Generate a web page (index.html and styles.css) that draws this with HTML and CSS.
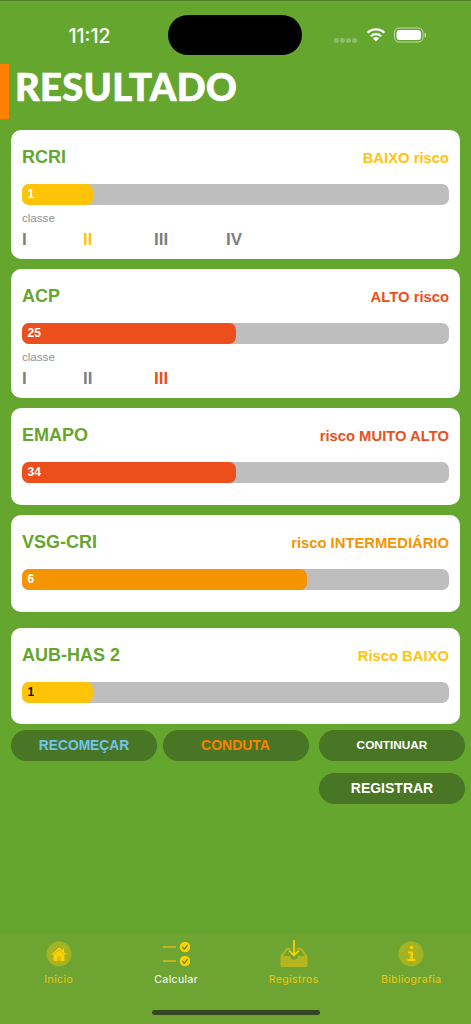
FILE: index.html
```html
<!DOCTYPE html>
<html lang="pt">
<head>
<meta charset="utf-8">
<title>Resultado</title>
<link rel="stylesheet" href="styles.css">
</head>
<body>
<div class="screen">
  <header class="status">
    <span class="time">11:12</span>
    <span class="island"></span>
    <span class="status-icons">
      <span class="signal"><i></i><i></i><i></i><i></i></span>
      <svg class="wifi" width="20" height="15" viewBox="0 0 20 15"><path d="M10 14.6 6.9 11.3a4.4 4.4 0 0 1 6.2 0Z" fill="#fff"/><path d="M4.9 9.2a7.3 7.3 0 0 1 10.2 0" fill="none" stroke="#fff" stroke-width="2.2"/><path d="M1.6 5.8a12 12 0 0 1 16.8 0" fill="none" stroke="#fff" stroke-width="2.2"/></svg>
      <svg class="battery" width="33" height="16" viewBox="0 0 33 16"><rect x=".5" y="1" width="28.500" height="14" rx="4.500" fill="none" stroke="#c4dcae" stroke-width="1"/><rect x="2.500" y="3" width="24.500" height="10" rx="3" fill="#fff"/><rect x="30.500" y="6" width="1.500" height="4" rx=".7" fill="#c4dcae"/></svg>
    </span>
  </header>

  <div class="title-row">
    <span class="title-mark"></span>
    <h1 class="title">RESULTADO</h1>
  </div>

  <main class="cards">
    <section class="card card-class">
      <div class="card-head"><h2>RCRI</h2><span class="risk c-yellow">BAIXO risco</span></div>
      <div class="track"><div class="fill b-yellow w-16">1</div></div>
      <div class="class-label">classe</div>
      <div class="classes"><span>I</span><span class="c-yellow">II</span><span>III</span><span>IV</span></div>
    </section>
    <section class="card card-class">
      <div class="card-head"><h2>ACP</h2><span class="risk c-red">ALTO risco</span></div>
      <div class="track"><div class="fill b-red w-50">25</div></div>
      <div class="class-label">classe</div>
      <div class="classes"><span>I</span><span>II</span><span class="c-red">III</span></div>
    </section>
    <section class="card card-emapo">
      <div class="card-head"><h2>EMAPO</h2><span class="risk c-red">risco MUITO ALTO</span></div>
      <div class="track"><div class="fill b-red w-50">34</div></div>
    </section>
    <section class="card card-vsg">
      <div class="card-head"><h2>VSG-CRI</h2><span class="risk c-orange">risco INTERMEDIÁRIO</span></div>
      <div class="track"><div class="fill b-orange w-67">6</div></div>
    </section>
    <section class="card card-last">
      <div class="card-head"><h2>AUB-HAS 2</h2><span class="risk c-yellow">Risco BAIXO</span></div>
      <div class="track"><div class="fill b-yellow w-16 dark">1</div></div>
    </section>
  </main>

  <div class="actions">
    <button class="btn c-blue">RECOMEÇAR</button>
    <button class="btn c-amber">CONDUTA</button>
    <button class="btn btn-small">CONTINUAR</button>
    <button class="btn btn-register">REGISTRAR</button>
  </div>

  <nav class="tabs">
    <div class="tab">
      <svg width="26" height="26" viewBox="0 0 26 26"><circle cx="13" cy="13" r="12.500" fill="#a3b322"/><path d="M13 6.500 5.800 13l.9 1L13 8.500l6.300 5.500.9-1-2.200-2V7.500H17v2Z" fill="#ffd000"/><path d="M7.500 14 13 9.300l5.500 4.700v6h-3.500v-4.200h-4V20H7.500Z" fill="#ffd000"/><rect x="11" y="15.800" width="4" height="4.200" fill="#d8c010"/></svg>
      <span>Inicio</span>
    </div>
    <div class="tab tab-active">
      <svg width="27" height="26" viewBox="0 0 27 26"><rect x="0" y="5" width="13" height="2" fill="#c4b41c"/><rect x="0" y="19" width="13" height="2" fill="#c4b41c"/><circle cx="22" cy="6" r="5.300" fill="#ffd000"/><circle cx="22" cy="20" r="5.300" fill="#ffd000"/><path d="m19.300 6 2 2.200L24.800 3.800M19.300 20l2 2.200 3.500-4.400" fill="none" stroke="#5f8f2c" stroke-width="1.300"/></svg>
      <span>Calcular</span>
    </div>
    <div class="tab">
      <svg width="28" height="28" viewBox="0 0 28 28"><path d="M1 17 6.500 9.500A2 2 0 0 1 8 9h3M27 17l-5.500-7.500A2 2 0 0 0 20 9h-3" fill="none" stroke="#b5b61f" stroke-width="2"/><path d="M1 16.500h9a4 4 0 0 0 8 0h9a1 1 0 0 1 1 1V26a2 2 0 0 1-2 2H2a2 2 0 0 1-2-2v-8.500a1 1 0 0 1 1-1Z" fill="#b5b61f"/><path d="M14 0v16M9 11l5 5 5-5" fill="none" stroke="#ffd000" stroke-width="1.800"/></svg>
      <span>Registros</span>
    </div>
    <div class="tab">
      <svg width="26" height="26" viewBox="0 0 26 26"><circle cx="13" cy="13" r="12.500" fill="#a3b322"/><circle cx="13.500" cy="6.500" r="1.800" fill="#ffd000"/><path d="M10 10.500h5V18h2.500v2h-8v-2H12.500v-5.500H10Z" fill="#ffd000"/></svg>
      <span>Bibliografia</span>
    </div>
  </nav>
  <div class="home-bar"></div>
</div>
</body>
</html>
```
FILE: styles.css
```css
* { box-sizing: border-box; }
html, body { margin: 0; padding: 0; }
body { background: #65a62f; font-family: "Liberation Sans", Arial, sans-serif; }
.screen {
  width: 471px; height: 1024px; overflow: hidden;
  background: #65a62f; border-top: 1px solid #4f7f2b;
  display: flex; flex-direction: column; position: relative;
}
.status { height: 63px; display: flex; align-items: flex-start; padding-top: 14px; }
.time {
  width: 168px; padding-top: 9px; text-align: center; padding-left: 11px;
  font: 500 19.500px "Inter", sans-serif; color: #fff;
}
.island { width: 134px; height: 40px; border-radius: 20px; background: #000; }
.status-icons { display: flex; align-items: flex-start; padding-left: 32px; }
.signal { display: flex; gap: 1.500px; margin-top: 23px; width: 24px; }
.signal i { width: 4.500px; height: 4.500px; border-radius: 50%; background: #8fbe6b; display: block; }
.wifi { margin: 12px 0 0 8px; }
.battery { margin: 12px 0 0 8px; }

.title-row { display: flex; height: 55px; margin-bottom: 11px; }
.title-mark { width: 9px; height: 55px; background: #ff8000; }
.title {
  margin: 0 0 0 6px; font: 900 38px/45px "Lato", sans-serif; color: #fff;
  -webkit-text-stroke: 0.7px #fff; letter-spacing: 0.35px;
}
.cards { display: flex; flex-direction: column; gap: 10px; padding: 0 11px; }
.card { background: #fff; border-radius: 10px; height: 96px; padding: 0 11px; }
.card-class { height: 129px; }
.card-emapo { height: 96.500px; }
.card-vsg { margin-top: .5px; height: 96.500px; }
.card-last { margin-top: 6.500px; }
.card-head { display: flex; justify-content: space-between; align-items: center; height: 54px; padding-top: 1.500px; }
.card-head h2 { margin: 0; font: 700 18px "Liberation Sans", sans-serif; color: #65a62f; }
.risk { font: 700 14.800px "Liberation Sans", sans-serif; }
.track { height: 21px; border-radius: 7px; background: #bebebe; }
.fill {
  height: 21px; border-radius: 7px; padding-left: 5.500px; color: #fff;
  font: 700 12px/21px "Liberation Sans", sans-serif;
}
.dark { color: #111; }
.w-16 { width: 16.600%; }
.w-50 { width: 50%; }
.w-67 { width: 66.700%; }
.b-yellow { background: #ffc408; }
.b-red { background: #ec4f1c; }
.b-orange { background: #f49500; }
.c-yellow { color: #ffc408 !important; }
.c-red { color: #ec4f1c !important; }
.c-orange { color: #f49500 !important; }
.class-label { font-size: 11.600px; line-height: 14px; color: #909090; margin-top: 6px; }
.classes {
  display: grid; grid-template-columns: 61px 71px 72px 60px; margin-top: 6px;
  font: 700 17px/18px "Liberation Sans", sans-serif; color: #7f7f7f;
}
.actions {
  display: grid; grid-template-columns: 146px 146px 146px; column-gap: 5.500px; row-gap: 11.500px;
  padding: 5.500px 6px 0 11px;
}
.btn {
  height: 31.500px; border: 0; border-radius: 16px; background: #487624; padding: 0;
  font: 700 13.800px "Liberation Sans", sans-serif; color: #fff;
}
.c-amber { font-size: 14px; }
.btn-small, .btn-register { margin-left: 5px; width: 146px; }
.btn-small { font-size: 11.800px; }
.btn-register { grid-column: 3; font-size: 14px; }
.c-blue { color: #72c4ee; }
.c-amber { color: #ff8000; }
.tabs {
  position: absolute; left: 0; right: 0; bottom: 0; height: 90px;
  background: #6ea532; display: grid; grid-template-columns: repeat(4, 1fr);
  padding: 6px 1px 0 0;
}
.tab {
  display: flex; flex-direction: column; align-items: center; height: 46px; justify-content: flex-end;
  font: 400 10.500px "Inter", sans-serif; color: #eac814; letter-spacing: 0.4px;
}
.tab span { margin-top: 6px; line-height: 13px; }
.tab-active span { color: #fff; }
.home-bar {
  position: absolute; left: 152px; bottom: 9px; width: 168px; height: 5px;
  border-radius: 3px; background: #33461f;
}
```
